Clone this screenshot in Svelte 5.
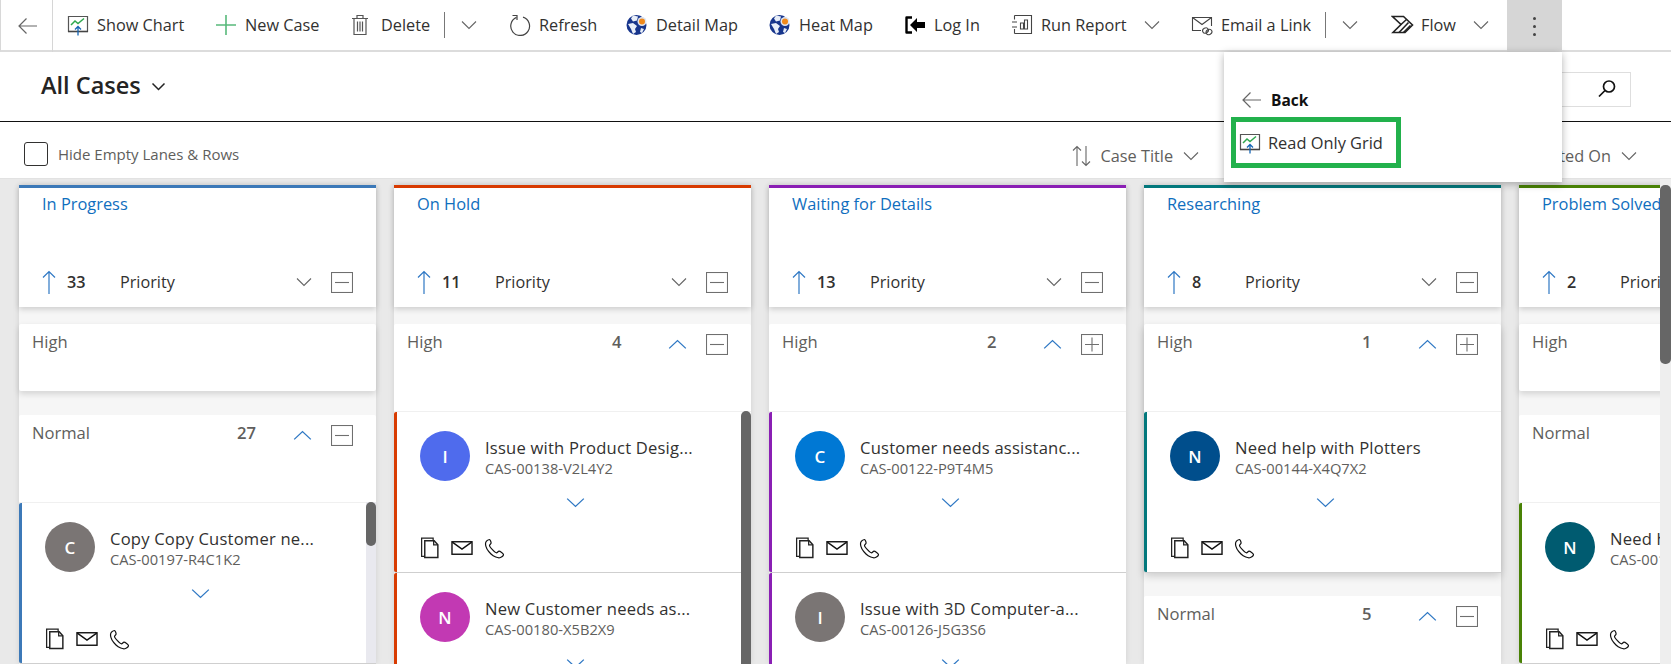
<script>
  const commands = [
    { icon: "chart", label: "Show Chart" },
    { icon: "plus", label: "New Case" },
    { icon: "trash", label: "Delete", split: true },
    { icon: "refresh", label: "Refresh" },
    { icon: "globe", label: "Detail Map" },
    { icon: "globe", label: "Heat Map" },
    { icon: "login", label: "Log In" },
    { icon: "report", label: "Run Report", caret: true },
    { icon: "email", label: "Email a Link", split: true },
    { icon: "flow", label: "Flow", caret: true }
  ];

  const lanes = [
    {
      title: "In Progress", color: "#3c79b8", total: 33,
      groups: [
        { name: "High", empty: true },
        {
          name: "Normal", count: 27, box: "minus", track: true,
          cards: [{ letter: "C", bg: "#7a7574", title: "Copy Copy Customer ne...", code: "CAS-00197-R4C1K2" }]
        }
      ]
    },
    {
      title: "On Hold", color: "#d83b01", total: 11, thumb: true,
      groups: [
        {
          name: "High", count: 4, box: "minus",
          cards: [
            { letter: "I", bg: "#4f6bed", title: "Issue with Product Desig...", code: "CAS-00138-V2L4Y2" },
            { letter: "N", bg: "#c239b3", title: "New Customer needs as...", code: "CAS-00180-X5B2X9" }
          ]
        }
      ]
    },
    {
      title: "Waiting for Details", color: "#8a1fb4", total: 13,
      groups: [
        {
          name: "High", count: 2, box: "plus",
          cards: [
            { letter: "C", bg: "#0078d4", title: "Customer needs assistanc...", code: "CAS-00122-P9T4M5" },
            { letter: "I", bg: "#7a7574", title: "Issue with 3D Computer-a...", code: "CAS-00126-J5G3S6" }
          ]
        }
      ]
    },
    {
      title: "Researching", color: "#03787c", total: 8,
      groups: [
        {
          name: "High", count: 1, box: "plus", shadow: true,
          cards: [{ letter: "N", bg: "#004e8c", title: "Need help with Plotters", code: "CAS-00144-X4Q7X2" }]
        },
        { name: "Normal", count: 5, box: "minus", cards: [] }
      ]
    },
    {
      title: "Problem Solved", color: "#498205", total: 2,
      groups: [
        { name: "High", empty: true },
        {
          name: "Normal",
          cards: [{ letter: "N", bg: "#005b70", title: "Need help with Plotters", code: "CAS-00143-K8L2W4" }]
        }
      ]
    }
  ];
</script>

{#snippet icon(name)}
  {#if name === "chart"}
    <svg width="22" height="22" viewBox="0 0 22 22" fill="none">
      <path d="M1.500 2.500h19v15h-19z" stroke="#555" stroke-width="1.200" />
      <path d="M1 17.500h20" stroke="#444" stroke-width="1.600" />
      <path d="M4 11l4-4 3 2.500 6-5" stroke="#2fa84f" stroke-width="1.500" />
      <path d="M11 21.500v-9M8 15.500l3-3 3 3" stroke="#1565b5" stroke-width="1.300" />
    </svg>
  {:else if name === "plus"}
    <svg width="22" height="22" viewBox="0 0 22 22" fill="none">
      <path d="M11 1v20M1 11h20" stroke="#58b97b" stroke-width="1.600" />
    </svg>
  {:else if name === "trash"}
    <svg width="18" height="22" viewBox="0 0 18 22" fill="none" stroke="#555" stroke-width="1.200">
      <path d="M1 4.500h16M6 4.500V1.500h6v3M3 4.500v16h12v-16M6.500 7.500v10M9 7.500v10M11.500 7.500v10" />
    </svg>
  {:else if name === "refresh"}
    <svg width="22" height="22" viewBox="0 0 22 22" fill="none" stroke="#444" stroke-width="1.200">
      <path d="M7.500 3.400a9.400 9.400 0 1 0 6.500-.3" />
      <path d="M3.500 1.500h4.500v4.500" />
    </svg>
  {:else if name === "globe"}
    <svg width="22" height="22" viewBox="0 0 22 22">
      <circle cx="10.500" cy="11" r="10" fill="#17358c" />
      <path d="M7 1.500l5 1-1 4-4 1-2-3zM2 10l5-1 4 3-2 3 1 3-3 2-2-5zM15 14l3 1-2 4-2-1z" fill="#e8eef8" />
      <circle cx="16" cy="7.500" r="4.500" fill="#dfe6f2" />
      <circle cx="16" cy="7.500" r="3" fill="#f18a1c" />
    </svg>
  {:else if name === "login"}
    <svg width="22" height="22" viewBox="0 0 22 22" fill="none">
      <path d="M8 3.500H2.500v15H8" stroke="#000" stroke-width="2.400" stroke-linejoin="round" />
      <path d="M6 11l7-7v4h8v6h-8v4z" fill="#000" />
    </svg>
  {:else if name === "report"}
    <svg width="22" height="22" viewBox="0 0 22 22" fill="none" stroke="#444" stroke-width="1.100">
      <path d="M3.500 1.500h17v18h-17M3.500 1.500v4M3.500 15v4.500M1 8h5M1 13h5" />
      <path d="M9.500 9h3v6h-3zM13.500 6h3v9h-3z" />
    </svg>
  {:else if name === "email"}
    <svg width="23" height="22" viewBox="0 0 23 22" fill="none" stroke="#444" stroke-width="1.100">
      <path d="M10 16.500H1.500v-13h19V12M1.500 3.500l9.500 7 9.500-7" />
      <ellipse cx="14.500" cy="16.500" rx="3" ry="2.500" transform="rotate(-30 14.500 16.500)" />
      <ellipse cx="18" cy="18" rx="3" ry="2.500" transform="rotate(-30 18 18)" />
    </svg>
  {:else if name === "flow"}
    <svg width="23" height="22" viewBox="0 0 23 22" fill="none" stroke="#222" stroke-width="1.600">
      <path d="M1.500 2.500h11l9 8.500-7.500 7.500H2l8-8z" />
      <path d="M10 10.500l5.500-5M8 18.500l9.500-10M12.500 18.500l7-7" />
    </svg>
  {/if}
{/snippet}

{#snippet chevron(dir = "down", tone = "#666", wide = false)}
  <svg class="chev" width={wide ? 19 : 16} height={wide ? 11 : 10} viewBox="0 0 16 10" fill="none" preserveAspectRatio="none">
    <path d={dir === "down" ? "M1 1.500l7 7 7-7" : "M1 8.500l7-7 7 7"} stroke={tone} stroke-width="1.100" />
  </svg>
{/snippet}

{#snippet backArrow()}
  <svg width="21" height="18" viewBox="0 0 21 18" fill="none">
    <path d="M20 9H2M9.500 1.500L2 9l7.500 7.500" stroke="#666" stroke-width="1.200" />
  </svg>
{/snippet}

{#snippet boxIcon(kind)}
  <span class="box">
    <svg width="22" height="21" viewBox="0 0 22 21" fill="none" stroke="#6f6f6f" stroke-width="1.100">
      <rect x="0.500" y="0.500" width="21" height="20" />
      <path d={kind === "plus" ? "M4 10.500h14M11 3.500v14" : "M4 10.500h14"} />
    </svg>
  </span>
{/snippet}

<div class="page">
  <header class="toolbar">
    <div class="back">{@render backArrow()}</div>
    {#each commands as cmd}
      <div class="cmd">
        <span class="cmd-icon">{@render icon(cmd.icon)}</span>
        <span class="cmd-label">{cmd.label}</span>
        {#if cmd.caret}
          <span class="caret">{@render chevron()}</span>
        {/if}
        {#if cmd.split}
          <span class="split"></span>
          <span class="split-caret">{@render chevron()}</span>
        {/if}
      </div>
    {/each}
    <div class="more"><i></i><i></i><i></i></div>

    <div class="flyout">
      <div class="fly-back">
        {@render backArrow()}
        <b>Back</b>
      </div>
      <div class="fly-item">
        {@render icon("chart")}
        <span>Read Only Grid</span>
      </div>
    </div>
  </header>

  <section class="title-row">
    <h1>All Cases</h1>
    <svg width="15" height="10" viewBox="0 0 15 10" fill="none">
      <path d="M1.500 1.500l6 6 6-6" stroke="#222" stroke-width="1.500" />
    </svg>
    <div class="search">
      <svg width="20" height="20" viewBox="0 0 20 20" fill="none" stroke="#111" stroke-width="1.700">
        <circle cx="12" cy="7.500" r="5.500" />
        <path d="M8 11.500l-6 6" />
      </svg>
    </div>
  </section>

  <section class="filter-row">
    <span class="check"></span>
    <span class="check-label">Hide Empty Lanes &amp; Rows</span>
    <div class="sort">
      <svg width="19" height="22" viewBox="0 0 19 22" fill="none" stroke="#666" stroke-width="1.100">
        <path d="M5 21V1.500M1 5.500l4-4 4 4M14 1v19.500M10 16.500l4 4 4-4" />
      </svg>
      <span class="sort-label">Case Title</span>
      {@render chevron()}
    </div>
    <div class="sort sort-last">
      <span class="sort-label">Created On</span>
      {@render chevron()}
    </div>
  </section>

  <main class="board">
    <div class="lanes">
      {#each lanes as lane}
        <div class="lane">
          <div class="lane-head" style="border-top-color: {lane.color}">
            <div class="lane-title">{lane.title}</div>
            <div class="lane-sort">
              <svg width="14" height="24" viewBox="0 0 14 24" fill="none" stroke="#2f78c4" stroke-width="1.200">
                <path d="M7 24V1.500M1 7.500l6-6 6 6" />
              </svg>
              <span class="lane-total">{lane.total}</span>
              <span class="lane-field">Priority</span>
              <span class="lane-caret">{@render chevron()}</span>
              {@render boxIcon("minus")}
            </div>
          </div>

          {#each lane.groups as group}
            <div class="group" class:empty={group.empty} class:with-shadow={group.shadow}>
              <div class="group-head">
                <span class="group-name">{group.name}</span>
                {#if group.count}
                  <span class="group-count">{group.count}</span>
                  <span class="group-caret">{@render chevron("up", "#2f78c4", true)}</span>
                  {@render boxIcon(group.box)}
                {/if}
              </div>
              {#if group.cards?.length}
                <div class="cards">
                  {#each group.cards as card}
                    <article class="card" style="border-left-color: {lane.color}">
                      <div class="card-top">
                        <span class="avatar" style="background: {card.bg}">{card.letter}</span>
                        <div class="card-text">
                          <div class="card-title">{card.title}</div>
                          <div class="card-code">{card.code}</div>
                        </div>
                      </div>
                      <div class="card-expand">{@render chevron("down", "#2f78c4", true)}</div>
                      <div class="card-actions">
                        <svg width="20" height="22" viewBox="0 0 19 21" fill="none" stroke="#222" stroke-width="1.200">
                          <path d="M4.500 18.500h-3V1h11v2.500" />
                          <path d="M4.500 3.500h9l3.500 4v12H4.500z" stroke-width="1.400" />
                          <path d="M13 3.500v4h4" />
                        </svg>
                        <svg width="22" height="14" viewBox="0 0 20 13" fill="none" stroke="#111" stroke-width="1.300">
                          <rect x="0.700" y="0.700" width="18.600" height="11.600" />
                          <path d="M1 1l9 6.500L19 1" />
                        </svg>
                        <svg width="21" height="21" viewBox="0 0 21 21" fill="none" stroke="#111" stroke-width="1.200">
                          <path d="M5.500 1.500C3.500 2 1.500 3.700 1.500 6c0 3 3 7.500 5.500 10s7 4.500 9.500 3.500c1.500-.6 3-2 3-3 0-.8-3.500-3.300-4.500-3.300-.9 0-1.600 1.600-2.600 1.600-1.400 0-6.900-5.800-6.900-7.300 0-1 1.600-1.500 1.600-2.500C7.100 4.200 6.300 1.500 5.500 1.500z" />
                        </svg>
                      </div>
                    </article>
                  {/each}
                  {#if group.track}
                    <span class="track"><span class="track-thumb"></span></span>
                  {/if}
                  {#if lane.thumb}
                    <span class="thumb-long"></span>
                  {/if}
                </div>
              {/if}
            </div>
          {/each}
        </div>
      {/each}
    </div>
    <div class="vscroll"><span></span></div>
  </main>
</div>

<style>
  :global(body) {
    margin: 0;
    background: #fff;
  }

  .page {
    height: 664px;
    overflow: hidden;
    display: flex;
    flex-direction: column;
    font-family: "Open Sans", "Liberation Sans", sans-serif;
    color: #323130;
  }

  .toolbar {
    position: relative;
    height: 50px;
    flex: none;
    display: grid;
    grid-template-columns: 53px 148px 136px 158px 117px 143px 135px 107px 180px 200px 129px 55px;
    align-items: stretch;
    border-bottom: 2px solid #dcdcdc;
    border-left: 1px solid #d8d8d8;
    z-index: 2;
  }

  .back {
    display: flex;
    align-items: center;
    justify-content: center;
    border-right: 1px solid #d6d6d6;
    padding-left: 1px;
    width: 52px;
    box-sizing: border-box;
    height: 52px;
  }

  .cmd {
    display: flex;
    align-items: center;
    white-space: nowrap;
    font-size: 16.3px;
    padding: 0 0 2px 13px;
  }

  .cmd-icon {
    display: flex;
    width: 30px;
    flex: none;
  }

  .caret {
    display: flex;
    margin-left: 17px;
  }

  .split {
    width: 1px;
    height: 26px;
    background: #777;
    margin-left: 14px;
  }

  .split-caret {
    display: flex;
    margin-left: 16px;
  }

  .more {
    background: #d6d6d6;
    height: 52px;
    display: flex;
    flex-direction: column;
    align-items: center;
    justify-content: center;
    gap: 5px;
  }

  .more i {
    width: 3px;
    height: 3px;
    border-radius: 50%;
    background: #444;
  }

  .flyout {
    position: absolute;
    left: 1223px;
    top: 52px;
    width: 338px;
    height: 130px;
    background: #fff;
    box-shadow: 0 2px 8px rgba(0, 0, 0, 0.3);
    box-sizing: border-box;
    padding: 38px 7px 0;
    z-index: 3;
  }

  .fly-back {
    display: flex;
    align-items: center;
    gap: 9px;
    padding-left: 10px;
    height: 20px;
  }

  .fly-back b {
    font-size: 15.5px;
    font-weight: 700;
    color: #111;
  }

  .fly-item {
    width: 170px;
    height: 51px;
    margin-top: 7px;
    box-sizing: border-box;
    border: 5px solid #22b14c;
    display: flex;
    align-items: center;
    gap: 7px;
    padding-left: 3px;
    font-size: 16.4px;
    white-space: nowrap;
  }

  .title-row {
    height: 70px;
    flex: none;
    box-sizing: border-box;
    display: flex;
    align-items: center;
    gap: 10px;
    padding: 0 40px 0 41px;
    border-bottom: 1px solid #111;
  }

  h1 {
    margin: -3px 0 0;
    font-size: 23.5px;
    font-weight: 600;
    color: #252423;
  }

  .search {
    margin: 5px 0 0 auto;
    width: 180px;
    height: 35px;
    box-sizing: border-box;
    border: 1px solid #dedede;
    display: flex;
    align-items: center;
    justify-content: flex-end;
    padding-right: 13px;
  }

  .filter-row {
    height: 56px;
    flex: none;
    box-sizing: border-box;
    display: flex;
    align-items: center;
    padding: 8px 34px 0 24px;
    font-size: 16.3px;
    color: #605e5c;
  }

  .check {
    width: 24px;
    height: 24px;
    box-sizing: border-box;
    border: 1px solid #323130;
    border-radius: 3px;
    margin-right: 10px;
  }

  .check-label {
    font-size: 15px;
    color: #605e5c;
  }

  .sort {
    display: flex;
    align-items: center;
    gap: 10px;
    margin: 4px 0 0 auto;
  }

  .sort:not(.sort-last) {
    margin-right: 325px;
  }

  .sort-last {
    margin-left: 0;
  }

  .board {
    flex: 1;
    min-height: 0;
    display: flex;
    background: #e9e9e9;
    border-top: 1px solid #e2e2e2;
  }

  .lanes {
    flex: 1;
    min-width: 0;
    display: flex;
    gap: 18px;
    padding: 6px 0 0 19px;
    overflow: hidden;
  }

  .lane {
    flex: 0 0 357px;
    background: #f6f6f6;
    box-shadow: 0 0 6px rgba(0, 0, 0, 0.1);
  }

  .lane-head {
    height: 122px;
    box-sizing: border-box;
    background: #fff;
    border-top: 3px solid;
    box-shadow: 0 2px 6px rgba(0, 0, 0, 0.18);
    padding: 4px 23px 13px 23px;
    display: flex;
    flex-direction: column;
    justify-content: space-between;
  }

  .lane-title {
    font-size: 16.4px;
    color: #106ebe;
    white-space: nowrap;
    overflow: hidden;
  }

  .lane-sort {
    display: flex;
    align-items: center;
    white-space: nowrap;
    font-size: 16.2px;
    height: 24px;
  }

  .lane-total {
    width: 53px;
    margin-left: 11px;
    font-weight: 600;
  }

  .lane-field {
    flex: 1;
  }

  .lane-caret {
    display: flex;
    margin-right: 19px;
  }

  .box {
    display: flex;
    flex: none;
  }

  .group {
    background: #fff;
    margin-top: 17px;
    border-radius: 2px;
  }

  .group + .group {
    margin-top: 24px;
  }

  .group.empty {
    height: 67px;
    box-shadow: 0 3px 6px rgba(0, 0, 0, 0.14);
  }

  .group.empty + .group {
    min-height: 300px;
  }

  .with-shadow {
    box-shadow: 0 4px 8px rgba(0, 0, 0, 0.18);
  }

  .group-head {
    height: 87px;
    box-sizing: border-box;
    display: flex;
    align-items: flex-start;
    padding: 6px 23px 0 13px;
    font-size: 16.6px;
    color: #605e5c;
  }

  .group.empty .group-head {
    height: 67px;
  }

  .group-name {
    width: 205px;
  }

  .group-count {
    width: 56px;
    font-weight: 600;
  }

  .group-caret {
    display: flex;
    margin: 9px 19px 0 0;
  }

  .group-head .box {
    margin-top: 4px;
  }

  .cards {
    position: relative;
    border-top: 1px solid #f0f0f0;
  }

  .card {
    height: 160px;
    box-sizing: border-box;
    border-left: 3px solid;
    border-radius: 2px 0 0 2px;
    background: #fff;
    padding: 19px 0 0 23px;
    margin-bottom: 1px;
    box-shadow: 0 1px 0 #cfcfcf;
  }

  .card-top {
    display: flex;
    gap: 15px;
  }

  .avatar {
    width: 50px;
    height: 50px;
    border-radius: 50%;
    flex: none;
    display: flex;
    align-items: center;
    justify-content: center;
    color: #fff;
    font-weight: 600;
    font-size: 17px;
  }

  .card-text {
    padding-top: 6px;
    white-space: nowrap;
    overflow: hidden;
  }

  .card-title {
    font-size: 16.6px;
    font-weight: 500;
    letter-spacing: 0.2px;
    line-height: 22px;
  }

  .card-code {
    font-size: 14.7px;
    color: #605e5c;
    line-height: 19px;
  }

  .card-expand {
    display: flex;
    justify-content: center;
    width: 310px;
    margin-top: 16px;
    height: 10px;
  }

  .card-actions {
    display: flex;
    align-items: center;
    gap: 11px;
    margin-top: 30px;
  }

  .track {
    position: absolute;
    top: -1px;
    right: 0;
    bottom: 0;
    width: 10px;
    background: #e9e9ef;
  }

  .track-thumb {
    display: block;
    height: 44px;
    border-radius: 5px;
    background: #666;
  }

  .thumb-long {
    position: absolute;
    top: -1px;
    right: 0;
    width: 10px;
    height: 260px;
    border-radius: 5px 5px 0 0;
    background: #666;
  }

  .vscroll {
    width: 11px;
    flex: none;
    padding-top: 6px;
    background: #eee;
  }

  .vscroll span {
    display: block;
    height: 179px;
    border-radius: 5px;
    background: #666;
  }
</style>
